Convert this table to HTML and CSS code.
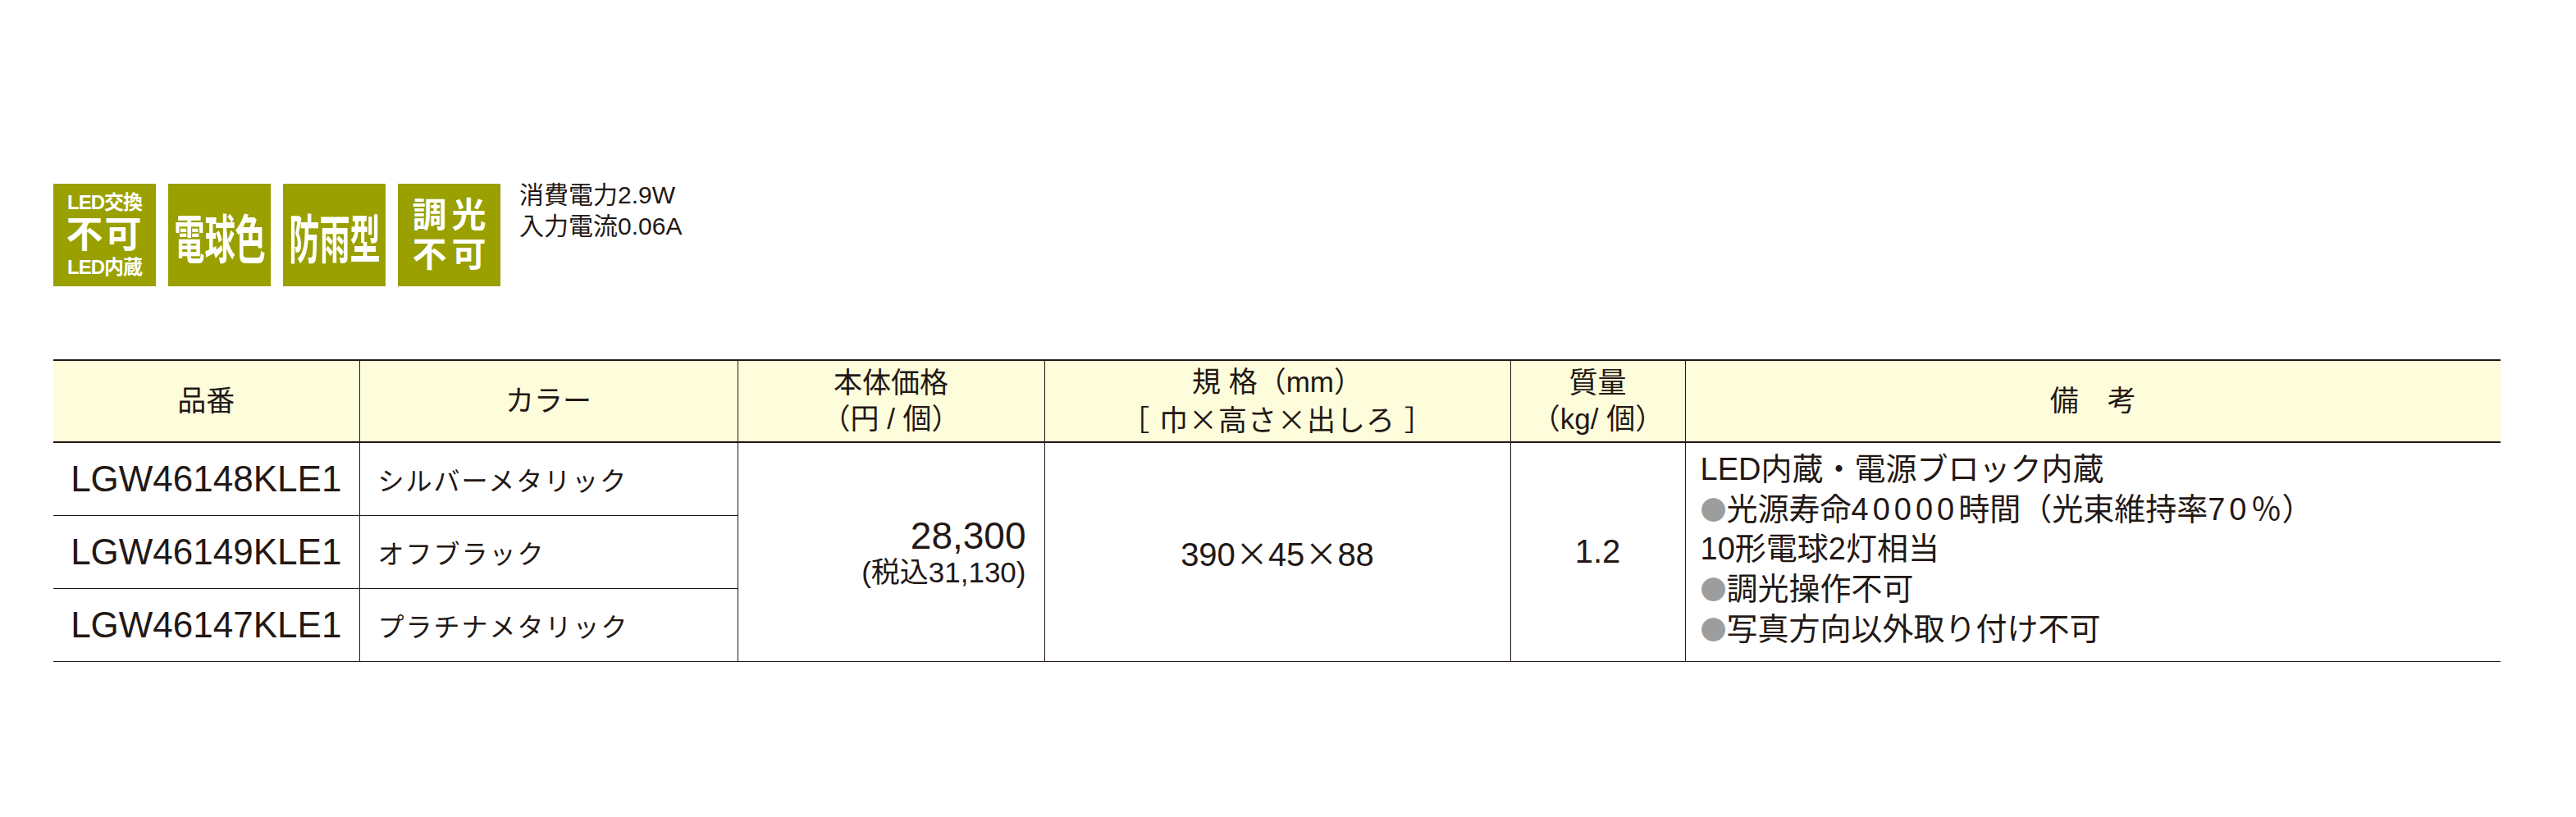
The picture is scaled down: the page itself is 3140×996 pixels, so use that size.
FILE: index.html
```html
<!DOCTYPE html>
<html lang="ja">
<head>
<meta charset="utf-8">
<title>LGW46148KLE1</title>
<link rel="stylesheet" href="styles.css">
</head>
<body>
<div class="page">
  <div class="badges">
    <div class="badge badge-led">
      <span class="led-small">LED交換</span>
      <span class="led-big">不可</span>
      <span class="led-small">LED内蔵</span>
    </div>
    <div class="badge"><span class="tall">電球色</span></div>
    <div class="badge"><span class="tall">防雨型</span></div>
    <div class="badge badge-two">
      <span class="two-line">調光</span>
      <span class="two-line">不可</span>
    </div>
    <div class="power">
      <div>消費電力2.9W</div>
      <div>入力電流0.06A</div>
    </div>
  </div>

  <table class="spec">
    <colgroup>
      <col class="c1"><col class="c2"><col class="c3"><col class="c4"><col class="c5"><col class="c6">
    </colgroup>
    <thead>
      <tr>
        <th>品番</th>
        <th>カラー</th>
        <th>本体価格<br>（円 / 個）</th>
        <th>規 格（mm）<br><span class="spread">［ 巾<span class="x">×</span>高さ<span class="x">×</span>出しろ ］</span></th>
        <th>質量<br>（kg/ 個）</th>
        <th>備　考</th>
      </tr>
    </thead>
    <tbody>
      <tr>
        <td class="code">LGW46148KLE1</td>
        <td class="color">シルバーメタリック</td>
        <td class="price" rowspan="3">
          <div class="price-main">28,300</div>
          <div class="price-tax">(税込31,130)</div>
        </td>
        <td class="num" rowspan="3">390<span class="x">×</span>45<span class="x">×</span>88</td>
        <td class="num" rowspan="3">1.2</td>
        <td class="notes" rowspan="3">
          <div>LED内蔵・電源ブロック内蔵</div>
          <div><span class="dot">●</span>光源寿命<span class="wd">40000</span>時間（光束維持率<span class="wd">70</span>％）</div>
          <div>10形電球2灯相当</div>
          <div><span class="dot">●</span>調光操作不可</div>
          <div><span class="dot">●</span>写真方向以外取り付け不可</div>
        </td>
      </tr>
      <tr>
        <td class="code">LGW46149KLE1</td>
        <td class="color">オフブラック</td>
      </tr>
      <tr>
        <td class="code">LGW46147KLE1</td>
        <td class="color">プラチナメタリック</td>
      </tr>
    </tbody>
  </table>
</div>
</body>
</html>
```

FILE: styles.css
```css
* { box-sizing: border-box; }

html, body {
  margin: 0;
  padding: 0;
  background: #ffffff;
}

body {
  font-family: "Liberation Sans", "Noto Sans CJK JP", sans-serif;
  color: #231815;
}

.page {
  padding: 224px 0 0 65px;
}

/* ---------- badges ---------- */
.badges {
  display: flex;
  align-items: flex-start;
  gap: 15px;
}

.badge {
  width: 125px;
  height: 125px;
  background: #99a000;
  color: #ffffff;
  font-family: "Liberation Sans", "Noto Sans CJK JP", sans-serif;
  font-weight: 700;
  display: flex;
  flex-direction: column;
  align-items: center;
  justify-content: center;
  overflow: hidden;
}

.led-small {
  font-size: 24px;
  line-height: 28px;
  letter-spacing: -1px;
}

.led-big {
  font-size: 45px;
  line-height: 51px;
  letter-spacing: 2px;
}

.tall {
  display: inline-block;
  font-family: "Noto Sans CJK JP", sans-serif;
  font-size: 64px;
  line-height: 64px;
  transform: scaleX(0.58);
  white-space: nowrap;
}

.two-line {
  font-size: 42px;
  line-height: 48px;
  letter-spacing: 6px;
  padding-left: 6px;
}

.power {
  margin-left: 8px;
  margin-top: -5px;
  font-family: "Liberation Sans", "Noto Sans CJK JP", sans-serif;
  font-size: 30px;
  line-height: 38px;
}

/* ---------- table ---------- */
.spec {
  margin-top: 89px;
  width: 2983px;
  table-layout: fixed;
  border-collapse: collapse;
  font-family: "Liberation Sans", "Noto Sans CJK JP", sans-serif;
}

.c1 { width: 373px; }
.c2 { width: 461px; }
.c3 { width: 374px; }
.c4 { width: 568px; }
.c5 { width: 213px; }
.c6 { width: 994px; }

.spec th {
  background: #fdfcdb;
  font-family: "Liberation Sans", "Noto Sans CJK JP", sans-serif;
  font-weight: 400;
  font-size: 35px;
  line-height: 44px;
  height: 100px;
  padding: 0;
  text-align: center;
  vertical-align: middle;
  border-top: 2px solid #231815;
  border-bottom: 2px solid #231815;
  border-left: 1px solid #231815;
}

.spec th:first-child { border-left: none; }

.spread {
  letter-spacing: 1px;
}

.spec td {
  height: 89px;
  padding: 0;
  border-bottom: 1px solid #231815;
  border-left: 1px solid #231815;
  vertical-align: middle;
}

.spec td.code {
  border-left: none;
  text-align: center;
  font-size: 44px;
}

.spec td.color {
  padding-left: 22px;
  font-family: "Noto Sans CJK JP", sans-serif;
  font-size: 32px;
  letter-spacing: 2px;
}

.spec td.price {
  text-align: right;
  padding-right: 22px;
}

.price-main {
  font-size: 46px;
  line-height: 50px;
}

.price-tax {
  font-size: 35px;
  line-height: 40px;
}

.spec td.num {
  text-align: center;
  font-size: 40px;
}

.x {
  font-family: "Noto Sans CJK JP", sans-serif;
}

.spec td.notes {
  padding: 8px 0 8px 18px;
  font-family: "Liberation Sans", "Noto Sans CJK JP", sans-serif;
  font-size: 38px;
  line-height: 48px;
  vertical-align: top;
}

.wd {
  letter-spacing: 5px;
}

.dot {
  color: #9d9d9d;
  font-family: "Noto Sans CJK JP", sans-serif;
  font-size: 32px;
}
```
